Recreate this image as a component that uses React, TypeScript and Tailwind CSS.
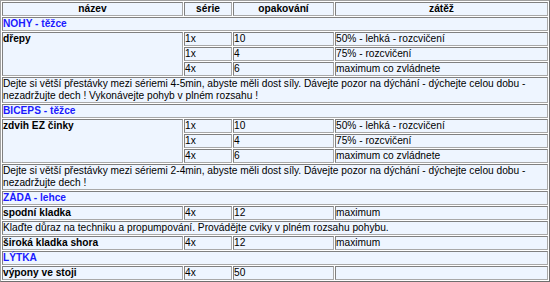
const cell =
  "p-0 align-top border border-t-[#808080] border-l-[#808080] border-b-[#a8a8a8] border-r-[#a8a8a8] bg-[#eef5ff]";

interface SetRow {
  sets: string;
  reps: string;
  load: string;
}

function Section({ title }: { title: string }) {
  return (
    <tr>
      <td colSpan={4} className={`${cell} font-bold text-[#1a1aff]`}>
        {title}
      </td>
    </tr>
  );
}

function Note({ text }: { text: string }) {
  return (
    <tr>
      <td colSpan={4} className={cell}>
        {text}
      </td>
    </tr>
  );
}

function Exercise({ name, rows }: { name: string; rows: SetRow[] }) {
  return (
    <>
      {rows.map((r, i) => (
        <tr key={i}>
          {i === 0 && (
            <td rowSpan={rows.length} className={`${cell} font-bold`}>
              {name}
            </td>
          )}
          <td className={cell}>{r.sets}</td>
          <td className={cell}>{r.reps}</td>
          <td className={cell}>{r.load}</td>
        </tr>
      ))}
    </>
  );
}

const warmup: SetRow[] = [
  { sets: "1x", reps: "10", load: "50% - lehká - rozcvičení" },
  { sets: "1x", reps: "4", load: "75% - rozcvičení" },
  { sets: "4x", reps: "6", load: "maximum co zvládnete" },
];

export default function App() {
  return (
    <div className="w-[550px] h-[282px] bg-white overflow-hidden">
      <table
        className="w-[550px] table-fixed border-separate border-spacing-[1px] bg-white border border-t-[#a0a0a0] border-l-[#a0a0a0] border-b-[#6e6e6e] border-r-[#6e6e6e] text-[10.2px] leading-[12px] text-black"
        style={{ fontFamily: '"Liberation Sans", Arial, sans-serif' }}
      >
        <thead>
          <tr>
            <th className={`${cell} w-[181px] bg-[#c0c0c0] font-bold text-center`}>název</th>
            <th className={`${cell} w-[48px] bg-[#c0c0c0] font-bold text-center`}>série</th>
            <th className={`${cell} w-[101px] bg-[#c0c0c0] font-bold text-center`}>opakování</th>
            <th className={`${cell} w-[213px] bg-[#c0c0c0] font-bold text-center`}>zátěž</th>
          </tr>
        </thead>
        <tbody>
          <Section title="NOHY - těžce" />
          <Exercise name="dřepy" rows={warmup} />
          <Note text="Dejte si větší přestávky mezi sériemi 4-5min, abyste měli dost síly. Dávejte pozor na dýchání - dýchejte celou dobu - nezadržujte dech ! Vykonávejte pohyb v plném rozsahu !" />

          <Section title="BICEPS - těžce" />
          <Exercise name="zdvih EZ činky" rows={warmup} />
          <Note text="Dejte si větší přestávky mezi sériemi 2-4min, abyste měli dost síly. Dávejte pozor na dýchání - dýchejte celou dobu - nezadržujte dech !" />

          <Section title="ZÁDA - lehce" />
          <Exercise name="spodní kladka" rows={[{ sets: "4x", reps: "12", load: "maximum" }]} />
          <Note text="Klaďte důraz na techniku a propumpování. Provádějte cviky v plném rozsahu pohybu." />
          <Exercise name="široká kladka shora" rows={[{ sets: "4x", reps: "12", load: "maximum" }]} />

          <Section title="LÝTKA" />
          <Exercise name="výpony ve stoji" rows={[{ sets: "4x", reps: "50", load: "" }]} />
        </tbody>
      </table>
    </div>
  );
}
